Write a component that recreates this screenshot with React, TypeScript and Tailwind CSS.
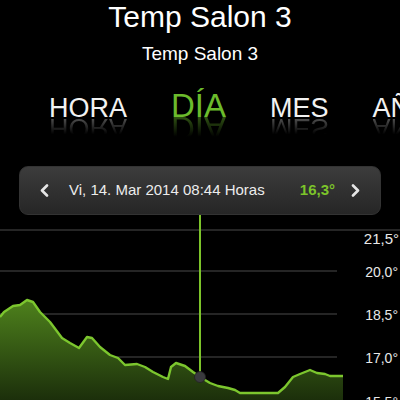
import React from "react";

const font = { fontFamily: '"Liberation Sans", Arial, sans-serif' };

type Tab = { label: string; active?: boolean };

const tabs: Tab[] = [
  { label: "HORA" },
  { label: "DÍA", active: true },
  { label: "MES" },
  { label: "AÑO" },
];

// chart points in page coords, shifted to svg coords (chart top = page y 215)
const raw: [number, number][] = [
  [0, 317], [4, 312], [10, 308], [13, 306], [20, 305], [27, 300], [33, 302],
  [40, 312], [50, 322], [62, 338], [70, 343], [79, 348], [87, 337], [92, 338],
  [100, 347], [110, 355], [118, 358], [125, 365], [137, 364], [145, 367],
  [153, 372], [163, 377], [168, 379], [171, 367], [176, 363], [185, 366],
  [193, 372], [200, 377], [210, 383], [218, 386], [228, 388], [235, 390],
  [240, 393], [260, 393], [278, 393], [285, 387], [293, 377], [300, 374],
  [305, 372], [310, 370], [317, 373], [325, 374], [330, 376], [343, 376],
];
const pts = raw.map(([x, y]) => [x, y - 215] as [number, number]);
const linePath = pts.map(([x, y], i) => `${i === 0 ? "M" : "L"}${x} ${y}`).join(" ");
const areaPath = `${linePath} L343 190 L0 190 Z`;

function TabLabel({ tab }: { tab: Tab }) {
  const size = tab.active ? "text-[33px]" : "text-[27px]";
  return (
    <div className="flex flex-col items-start">
      <span className={`${size} leading-none ${tab.active ? "text-[#6cbb2c]" : "text-[#f2f2f2]"}`}>
        {tab.label}
      </span>
      <span
        aria-hidden
        className={`${size} leading-none mt-[-0.3em] scale-y-[-1] bg-linear-to-t to-transparent to-75% bg-clip-text text-transparent ${
          tab.active ? "from-[#6cbb2c]/55" : "from-white/40"
        }`}
      >
        {tab.label}
      </span>
    </div>
  );
}

function Chevron({ dir }: { dir: "left" | "right" }) {
  return (
    <svg width="9" height="13" viewBox="0 0 9 13" className="shrink-0">
      <path
        d={dir === "left" ? "M7 1.5 L2 6.5 L7 11.5" : "M2 1.5 L7 6.5 L2 11.5"}
        fill="none"
        stroke="#e6e6e6"
        strokeWidth="2.6"
        strokeLinecap="round"
        strokeLinejoin="round"
      />
    </svg>
  );
}

export default function App() {
  return (
    <div className="w-[400px] h-[400px] bg-black overflow-hidden flex flex-col" style={font}>
      <div className="text-white text-center text-[30px] leading-[34px]">Temp Salon 3</div>
      <div className="text-white text-center text-[19px] leading-[22px] mt-[9px]">Temp Salon 3</div>

      <div className="flex items-baseline gap-[44px] pl-[49px] mt-[24px] h-[77px] whitespace-nowrap">
        {tabs.map((t) => (
          <TabLabel key={t.label} tab={t} />
        ))}
      </div>

      <div className="mx-[19px] h-[49px] shrink-0 rounded-[9px] bg-linear-to-b from-[#3c3c3c] to-[#262626] border border-[#333] flex items-center px-[20px]">
        <Chevron dir="left" />
        <span className="ml-[20px] flex-1 text-[15px] text-[#ececec]">Vi, 14. Mar 2014 08:44 Horas</span>
        <span className="text-[15px] font-bold text-[#7cc42a]">16,3°</span>
        <span className="ml-[16px]">
          <Chevron dir="right" />
        </span>
      </div>

      <svg width="400" height="185" viewBox="0 0 400 185" className="shrink-0">
        <defs>
          <linearGradient id="fill" x1="0" y1="80" x2="0" y2="185" gradientUnits="userSpaceOnUse">
            <stop offset="0" stopColor="#50851d" />
            <stop offset="1" stopColor="#1c2f0b" />
          </linearGradient>
        </defs>
        <line x1="0" y1="15" x2="400" y2="15" stroke="#4a4a4a" strokeWidth="1.2" />
        {[56, 99, 142].map((y) => (
          <line key={y} x1="0" y1={y} x2="337" y2={y} stroke="#4a4a4a" strokeWidth="1.2" />
        ))}
        <path d={areaPath} fill="url(#fill)" />
        <path d={linePath} fill="none" stroke="#7cc62e" strokeWidth="2.4" strokeLinejoin="round" />
        <line x1="200" y1="0" x2="200" y2="162" stroke="#7cc42a" strokeWidth="2" />
        <circle cx="200" cy="162" r="5.5" fill="#3a3a3e" stroke="#222" strokeWidth="0.8" />
        <g fill="#e8e8e8" fontSize="14" textAnchor="end" style={font}>
          <text x="399" y="29" fontSize="15">21,5°</text>
          <text x="398" y="62">20,0°</text>
          <text x="398" y="105">18,5°</text>
          <text x="398" y="148">17,0°</text>
          <text x="398" y="192">15,5°</text>
        </g>
      </svg>
    </div>
  );
}
